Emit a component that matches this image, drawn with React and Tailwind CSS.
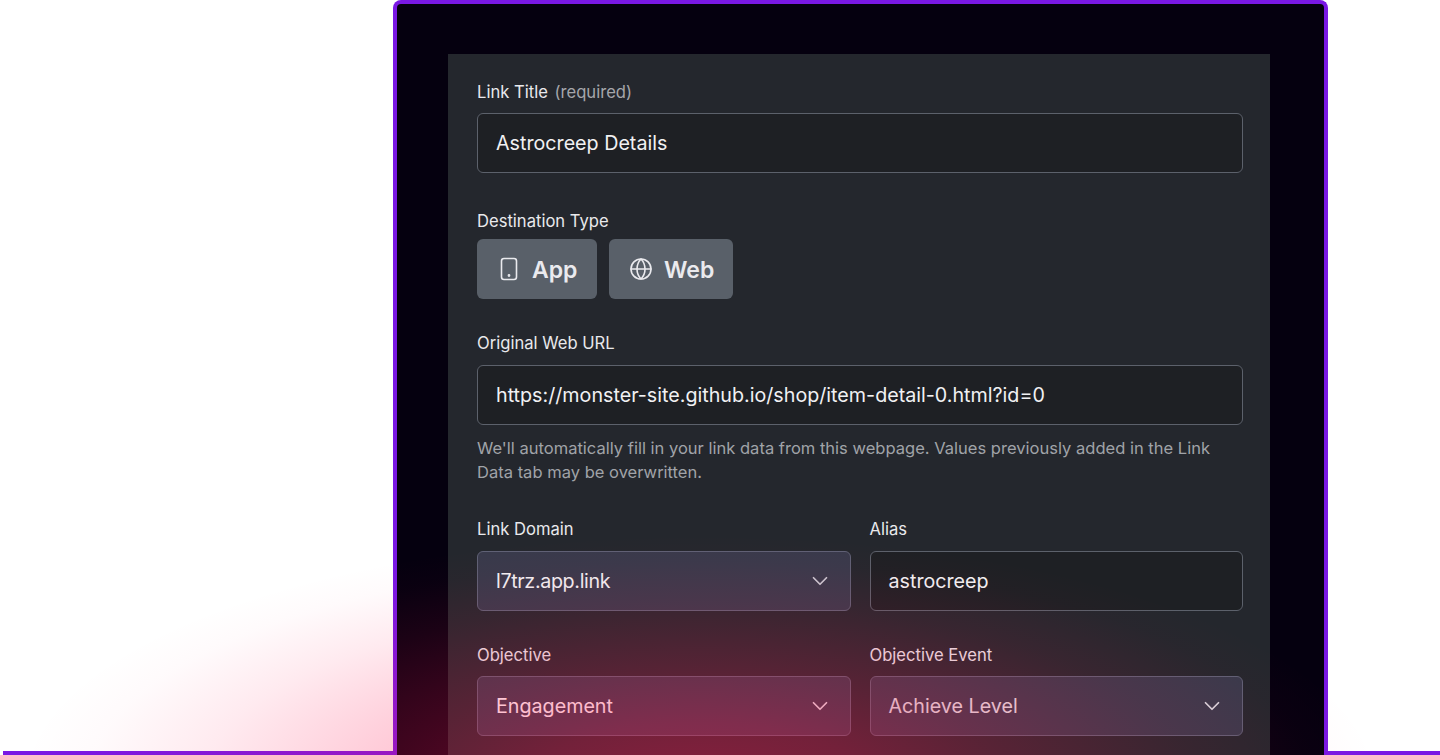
import React from "react";
import { ChevronDown, Globe } from "lucide-react";

function Label({ children }) {
  return <div className="h-[22px] text-[16.6px] leading-[22px] text-[#e9e9ec]">{children}</div>;
}

function Input({ children }) {
  return (
    <div className="flex h-[59.5px] items-center rounded-[6px] border border-[#5c616b] bg-[#1e2024] px-[18px] pt-[2px] text-[19.7px] text-[#f1f1f3]">
      {children}
    </div>
  );
}

function Select({ children, text, chevron }) {
  return (
    <div className="flex h-[59.5px] items-center justify-between rounded-[6px] border border-[#5f6175] bg-[#383a4b] pl-[18px] pr-[17px] text-[19.7px]">
      <span className={`pt-[2px] ${text}`}>{children}</span>
      <ChevronDown size={26} strokeWidth={1.6} className={chevron} />
    </div>
  );
}

function TypeButton({ icon, children, width }) {
  return (
    <div className={`flex h-[59.5px] items-center gap-[11px] rounded-[6px] bg-[#596069] pl-[20px] text-[23px] font-semibold text-[#eaeaee] ${width}`}>
      {icon}
      <span className="pt-[2px]">{children}</span>
    </div>
  );
}

function TabletIcon() {
  return (
    <svg width="24" height="24" viewBox="0 0 24 24" fill="none" stroke="currentColor" strokeWidth="1.6">
      <rect x="4.5" y="1.5" width="15" height="21" rx="2.5" />
      <circle cx="12" cy="18.5" r="0.6" fill="currentColor" />
    </svg>
  );
}

export default function App() {
  return (
    <div className="relative h-[755px] w-[1440px] overflow-hidden bg-white pl-[3px] font-['Inter',sans-serif]">
      <div className="h-[755px] border-b-[4px] border-[#7a18e4]">
        <div className="ml-[390px] h-[755px] w-[935px] rounded-t-[8px] border-x-[4px] border-t-[4px] border-[#7a18e4] bg-[#05000f] pl-[51px] pt-[50px]">
          <div className="h-[720px] w-[822px] bg-[#24272d] pl-[29px] pr-[27px] pt-[27px]">
            <Label>
              Link Title <span className="ml-[2px] text-[#a4a6ab]">(required)</span>
            </Label>
            <div className="mt-[10px]">
              <Input>Astrocreep Details</Input>
            </div>

            <div className="mt-[37.5px]">
              <Label>Destination Type</Label>
            </div>
            <div className="mt-[7px] flex gap-[12px]">
              <TypeButton width="w-[120px]" icon={<TabletIcon />}>App</TypeButton>
              <TypeButton width="w-[124px]" icon={<Globe size={24} strokeWidth={1.6} />}>Web</TypeButton>
            </div>

            <div className="mt-[33.5px]">
              <Label>Original Web URL</Label>
            </div>
            <div className="mt-[11px]">
              <Input>https://monster-site.github.io/shop/item-detail-0.html?id=0</Input>
            </div>
            <p className="mt-[11.5px] text-[16.55px] leading-[24px] text-[#a0a3a8]">
              We'll automatically fill in your link data from this webpage. Values previously added in the Link Data tab may be overwritten.
            </p>

            <div className="mt-[34px] grid grid-cols-2 gap-x-[19px]">
              <div>
                <Label>Link Domain</Label>
                <div className="mt-[11px]">
                  <Select text="text-[#f1f1f3] tracking-[-0.35px]" chevron="text-[#c9c9d2]">l7trz.app.link</Select>
                </div>
              </div>
              <div>
                <Label>Alias</Label>
                <div className="mt-[11px]">
                  <Input>astrocreep</Input>
                </div>
              </div>
            </div>

            <div className="mt-[33.5px] grid grid-cols-2 gap-x-[19px]">
              <div>
                <Label>Objective</Label>
                <div className="mt-[10px]">
                  <Select text="text-[#ffffff]" chevron="text-[#e6e6ea]">Engagement</Select>
                </div>
              </div>
              <div>
                <Label>Objective Event</Label>
                <div className="mt-[10px]">
                  <Select text="text-[#e2e2e6]" chevron="text-[#d8d8de]">Achieve Level</Select>
                </div>
              </div>
            </div>
          </div>
        </div>
      </div>
      <div className="pointer-events-none absolute inset-0 bg-[radial-gradient(ellipse_680px_250px_at_700px_785px,rgba(255,22,81,0.46)_0%,rgba(255,22,81,0.36)_25%,rgba(255,22,81,0.24)_45%,rgba(255,22,81,0.09)_73%,rgba(255,22,81,0.02)_90%,rgba(255,22,81,0)_100%)]" />
    </div>
  );
}
